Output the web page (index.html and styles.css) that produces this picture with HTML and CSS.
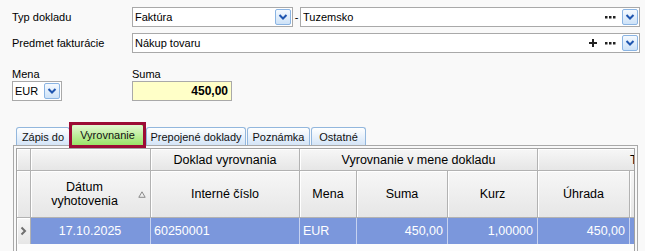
FILE: index.html
```html
<!DOCTYPE html>
<html>
<head>
<meta charset="utf-8">
<link rel="stylesheet" href="styles.css">
</head>
<body>
<div class="page">
  <div class="row">
    <span class="lbl">Typ dokladu</span>
    <div class="field f-typ">
      <span class="val">Faktúra</span>
      <span class="ddbtn"><svg width="10" height="8" viewBox="0 0 10 8"><path d="M1.5 2 L5 5.5 L8.5 2" fill="none" stroke="#1f56b0" stroke-width="2"/></svg></span>
    </div>
    <span class="dash">-</span>
    <div class="field f-grow">
      <span class="val">Tuzemsko</span>
      <span class="dots"><svg width="11" height="3" viewBox="0 0 11 3"><rect x="0" y="0" width="2.5" height="2.5" fill="#222"/><rect x="4" y="0" width="2.5" height="2.5" fill="#222"/><rect x="8" y="0" width="2.5" height="2.5" fill="#222"/></svg></span>
      <span class="ddbtn"><svg width="10" height="8" viewBox="0 0 10 8"><path d="M1.5 2 L5 5.5 L8.5 2" fill="none" stroke="#1f56b0" stroke-width="2"/></svg></span>
    </div>
  </div>
  <div class="row">
    <span class="lbl">Predmet fakturácie</span>
    <div class="field f-grow">
      <span class="val">Nákup tovaru</span>
      <span class="plus"><svg width="8" height="8" viewBox="0 0 8 8"><path d="M0 4 H8 M4 0 V8" stroke="#222" stroke-width="2"/></svg></span>
      <span class="dots"><svg width="11" height="3" viewBox="0 0 11 3"><rect x="0" y="0" width="2.5" height="2.5" fill="#222"/><rect x="4" y="0" width="2.5" height="2.5" fill="#222"/><rect x="8" y="0" width="2.5" height="2.5" fill="#222"/></svg></span>
      <span class="ddbtn"><svg width="10" height="8" viewBox="0 0 10 8"><path d="M1.5 2 L5 5.5 L8.5 2" fill="none" stroke="#1f56b0" stroke-width="2"/></svg></span>
    </div>
  </div>
  <div class="money">
    <div class="mcol">
      <div class="mlbl">Mena</div>
      <div class="field f-mena">
        <span class="val">EUR</span>
        <span class="ddbtn"><svg width="10" height="8" viewBox="0 0 10 8"><path d="M1.5 2 L5 5.5 L8.5 2" fill="none" stroke="#1f56b0" stroke-width="2"/></svg></span>
      </div>
    </div>
    <div class="mcol">
      <div class="mlbl">Suma</div>
      <div class="field f-suma"><span class="val">450,00</span></div>
    </div>
  </div>
  <div class="tabs">
    <div class="tab t-zapis">Zápis do</div>
    <div class="tab sel t-vyr">Vyrovnanie</div>
    <div class="tab t-prep">Prepojené doklady</div>
    <div class="tab t-pozn">Poznámka</div>
    <div class="tab t-ost">Ostatné</div>
  </div>
  <div class="panel">
    <div class="gridwrap">
      <div class="grid">
        <div class="hc"></div>
        <div class="hc"></div>
        <div class="hc">Doklad vyrovnania</div>
        <div class="hc span3">Vyrovnanie v mene dokladu</div>
        <div class="hc span2">Tuzemská mena</div>

        <div class="hc"></div>
        <div class="hc hdat"><span class="htxt">Dátum<br>vyhotovenia</span><svg class="sort" width="8" height="7" viewBox="0 0 8 7"><path d="M0.8 6.3 L4 0.8 L7.2 6.3 Z" fill="none" stroke="#8a8a8a" stroke-width="1"/></svg></div>
        <div class="hc">Interné číslo</div>
        <div class="hc">Mena</div>
        <div class="hc">Suma</div>
        <div class="hc">Kurz</div>
        <div class="hc">Úhrada</div>
        <div class="hc"></div>

        <div class="hc selc"><svg width="7" height="10" viewBox="0 0 7 10"><path d="M1.5 1.5 L5 5 L1.5 8.5" fill="none" stroke="#6f6f6f" stroke-width="2"/></svg></div>
        <div class="dc c">17.10.2025</div>
        <div class="dc">60250001</div>
        <div class="dc">EUR</div>
        <div class="dc r">450,00</div>
        <div class="dc r">1,00000</div>
        <div class="dc r">450,00</div>
        <div class="dc"></div>
      </div>
    </div>
  </div>
</div>
</body>
</html>
```
FILE: styles.css
```css
* { box-sizing: border-box; }
body {
  margin: 0;
  background: #f9f9f9;
  font-family: "Liberation Sans", Arial, sans-serif;
  font-size: 11px;
  color: #000;
  overflow: hidden;
}
.page { padding: 7px 5px 0 12px; }
.row { display: flex; align-items: center; height: 20px; }
.row + .row { margin-top: 6px; }
.lbl { width: 120px; flex: none; }
.field {
  height: 20px;
  border: 1px solid #a9a9a9;
  background: #fff;
  display: flex;
  align-items: center;
  padding: 0 1px 0 2px;
}
.val { flex: 1; white-space: nowrap; overflow: hidden; }
.f-typ { width: 161px; flex: none; }
.f-grow { flex: 1; }
.dash { width: 7px; flex: none; text-align: center; }
.ddbtn {
  width: 16px;
  height: 16px;
  flex: none;
  border: 1px solid #8ab4e3;
  border-radius: 2px;
  background: linear-gradient(#f5faff, #cde2f8);
  display: flex;
  align-items: center;
  justify-content: center;
}
.dots { display: flex; margin-right: 6px; }
.plus { display: flex; margin-right: 8px; }
.money { display: flex; margin-top: 15px; }
.mcol { width: 120px; }
.mlbl { line-height: 13px; height: 13px; }
.f-mena { width: 50px; }
.f-suma {
  width: 100px;
  background: #ffffc8;
  font-weight: bold;
  font-size: 12px;
  text-align: right;
  padding-right: 3px;
}
.tabs {
  display: flex;
  align-items: flex-end;
  height: 21px;
  margin-top: 23px;
  margin-left: 4px;
  gap: 1px;
}
.tab {
  height: 18px;
  border: 1px solid #93b7dd;
  border-bottom: none;
  border-radius: 3px 3px 0 0;
  background: linear-gradient(#ffffff, #d4e5f7);
  display: flex;
  align-items: center;
  justify-content: center;
  white-space: nowrap;
  color: #111;
}
.tab.sel {
  height: 21px;
  border-color: #78c450;
  background: linear-gradient(#e4f8d4, #9ae468);
  position: relative;
  z-index: 1;
  margin-right: 1px;
}
.tab.sel::after {
  content: "";
  position: absolute;
  top: -3px;
  left: -3px;
  right: -3px;
  bottom: -3px;
  border: 3px solid #9c0c36;
}
.t-zapis { width: 54px; }
.t-vyr { width: 73px; }
.t-prep { width: 100px; }
.t-pozn { width: 63px; }
.t-ost { width: 55px; }
.panel {
  margin-left: 1px;
  width: 625px;
  height: 106px;
  border: 1px solid #a9a9a9;
  border-bottom: none;
  padding: 2px 2px 0;
  background: #f9f9f9;
}
.gridwrap {
  height: 100%;
  border: 1px solid #a3a3a3;
  border-bottom: none;
  overflow: hidden;
  background: #fcfcfc;
}
.grid {
  display: grid;
  grid-template-columns: 14px 120px 149px 57px 91px 90px 92px 178px;
  grid-template-rows: 22px 47px 26px;
  width: 791px;
  font-size: 12.5px;
}
.hc {
  background: linear-gradient(#f7f7f7, #e6e6e6);
  border-right: 1px solid #b2b2b2;
  border-bottom: 1px solid #b2b2b2;
  box-shadow: inset 1px 1px 0 #ffffff;
  display: flex;
  align-items: center;
  justify-content: center;
  white-space: nowrap;
  overflow: hidden;
}
.span3 { grid-column: span 3; }
.span2 { grid-column: span 2; justify-content: flex-start; padding-left: 92px; }
.hdat { justify-content: flex-start; }
.htxt { flex: 1; text-align: center; line-height: 14.5px; }
.sort { margin-right: 4px; flex: none; }
.selc { border-bottom: none; }
.dc {
  background: #7b97dc;
  color: #fff;
  border-right: 1px solid #c6d2f0;
  display: flex;
  align-items: center;
  padding: 0 4px 0 3px;
  white-space: nowrap;
}
.dc.c { justify-content: center; }
.dc.r { justify-content: flex-end; }
```
